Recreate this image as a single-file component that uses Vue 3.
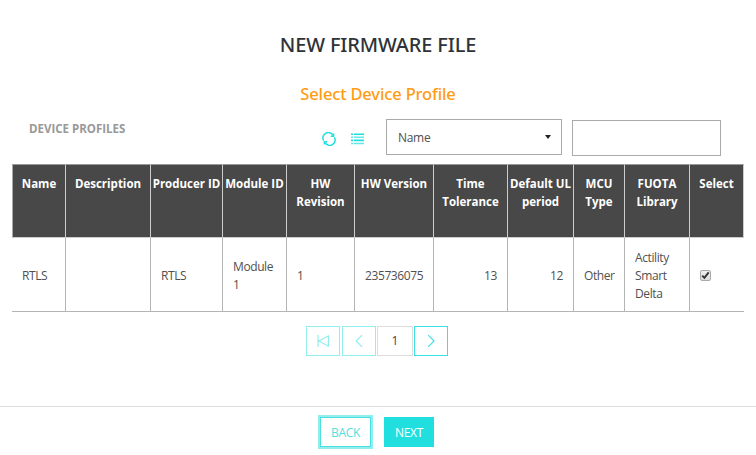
<script setup>
import { ref } from 'vue'

const columns = [
  { label: ['Name'], width: 54 },
  { label: ['Description'], width: 85 },
  { label: ['Producer ID'], width: 72 },
  { label: ['Module ID'], width: 64 },
  { label: ['HW', 'Revision'], width: 68 },
  { label: ['HW Version'], width: 79 },
  { label: ['Time', 'Tolerance'], width: 74 },
  { label: ['Default UL', 'period'], width: 66 },
  { label: ['MCU', 'Type'], width: 51 },
  { label: ['FUOTA', 'Library'], width: 65 },
  { label: ['Select'], width: 54 },
]
const cells = [
  { lines: ['RTLS'] },
  { lines: [] },
  { lines: ['RTLS'] },
  { lines: ['Module', '1'] },
  { lines: ['1'] },
  { lines: ['235736075'], right: true },
  { lines: ['13'], right: true },
  { lines: ['12'], right: true },
  { lines: ['Other'] },
  { lines: ['Actility', 'Smart', 'Delta'] },
]
const selected = ref(true)
const filter = ref('')
</script>

<template>
  <main class="page">
    <h1>NEW FIRMWARE FILE</h1>
    <h2>Select Device Profile</h2>
    <div class="toolbar">
      <span class="caption">DEVICE PROFILES</span>
      <svg class="refresh" width="14" height="14" viewBox="0 0 14 14" fill="none" stroke="#22dede" stroke-width="1.5">
        <path d="M1.6 8.6A5.3 5.3 0 0 1 10.9 3.3M12.4 5.4A5.3 5.3 0 0 1 3.1 10.7" />
        <path d="M11.6 1.4v2.8H8.8M2.4 12.6V9.8h2.8" />
      </svg>
      <svg class="list" width="13" height="12" viewBox="0 0 13 12" fill="#22dede">
        <path d="M0 .4h2v1.6H0zM3 .4h10v1.6H3zM0 6.6h2v1.6H0zM3 6.6h10v1.6H3z" />
        <path opacity=".7" d="M0 3.5h2v1.5H0zM3 3.5h10v1.5H3zM0 9.7h2v1.5H0zM3 9.7h10v1.5H3z" />
      </svg>
      <div class="select"><span>Name</span><i class="caret"></i></div>
      <input v-model="filter" class="filter" type="text" />
    </div>
    <table>
      <colgroup>
        <col v-for="c in columns" :key="c.label[0]" :style="{ width: c.width + 'px' }" />
      </colgroup>
      <thead>
        <tr>
          <th v-for="c in columns" :key="c.label[0]">
            <div v-for="l in c.label" :key="l">{{ l }}</div>
          </th>
        </tr>
      </thead>
      <tbody>
        <tr>
          <td v-for="(c, i) in cells" :key="i" :class="{ right: c.right }">
            <div v-for="l in c.lines" :key="l">{{ l }}</div>
          </td>
          <td>
            <button class="check" role="checkbox" :aria-checked="selected" @click="selected = !selected">
              <svg v-if="selected" width="9" height="9" viewBox="0 0 9 9" fill="none" stroke="#333" stroke-width="1.9">
                <path d="M1.2 4.6L3.4 6.9L7.7 1.3" />
              </svg>
            </button>
          </td>
        </tr>
      </tbody>
    </table>
    <nav class="pager">
      <button class="dim">
        <svg width="14" height="14" viewBox="0 0 14 14"><path d="M2 1v12M12.4 1.8v10.4L2.8 7z" /></svg>
      </button>
      <button class="dim">
        <svg width="14" height="14" viewBox="0 0 14 14"><path d="M10 1.2L4.2 7l5.8 5.8" /></svg>
      </button>
      <button class="current">1</button>
      <button>
        <svg width="14" height="14" viewBox="0 0 14 14"><path d="M4.2 1.2L10 7L4.2 12.8" /></svg>
      </button>
    </nav>
    <footer>
      <button class="back">BACK</button>
      <button class="next">NEXT</button>
    </footer>
  </main>
</template>

<style>
body {
  background: #fff;
}
</style>

<style scoped>
* {
  box-sizing: border-box;
}
.page {
  width: 756px;
  height: 455px;
  display: flex;
  flex-direction: column;
  overflow: hidden;
  font-family: "Open Sans", "Noto Sans", sans-serif;
  font-size: 12px;
  line-height: 18px;
  color: #505050;
}
h1 {
  margin: 31px 0 0;
  height: 28px;
  font: 500 20px/28px "Noto Sans", sans-serif;
  letter-spacing: -0.15px;
  color: #2e3338;
  text-align: center;
}
h2 {
  margin: 23px 0 0;
  height: 24px;
  font: 500 16.5px/24px "Noto Sans", sans-serif;
  letter-spacing: -0.15px;
  color: #ff9c12;
  text-align: center;
}
.toolbar {
  display: flex;
  align-items: flex-start;
  height: 58px;
  padding: 13px 0 0 29px;
}
.caption {
  width: 293px;
  padding-top: 1px;
  font-size: 11.5px;
  font-weight: 700;
  color: #999;
}
.refresh {
  margin-top: 13px;
}
.list {
  margin: 14px 0 0 15px;
}
.select {
  display: flex;
  align-items: center;
  justify-content: space-between;
  width: 176px;
  height: 36px;
  margin-left: 22px;
  padding: 0 10px 0 11px;
  border: 1px solid #aaa;
  letter-spacing: -0.5px;
}
.select span {
  padding-top: 1px;
  letter-spacing: -0.3px;
}
.caret {
  border: 3.5px solid transparent;
  border-top: 4px solid #222;
  border-bottom: 0;
}
.filter {
  width: 149px;
  height: 36px;
  margin: 1px 0 0 10px;
  border: 1px solid #aaa;
  background: #fff;
  outline: 0;
}
table {
  width: 732px;
  margin-left: 12px;
  table-layout: fixed;
  border-collapse: separate;
  border-spacing: 0;
}
th {
  height: 74px;
  padding: 10px 0 0;
  background: #484848;
  border: solid #ccc;
  border-width: 1px 1px 1px 0;
  border-top-color: #999;
  vertical-align: top;
  font-size: 11.5px;
  font-weight: 700;
  white-space: nowrap;
  color: #fff;
}
th:first-child {
  border-left: 1px solid #aaa;
}
td {
  height: 74px;
  padding: 2px 10px 0;
  border: solid #b4b4b4;
  border-width: 0 1px 1px 0;
  vertical-align: middle;
  white-space: nowrap;
  letter-spacing: -0.4px;
}
td:last-child {
  border-right: 0;
}
.right {
  text-align: right;
}
.check {
  display: flex;
  align-items: center;
  justify-content: center;
  width: 11px;
  height: 11px;
  padding: 0;
  background: linear-gradient(#eee, #ddd);
  border: 1px solid #aaa;
  border-radius: 2px;
}
.pager {
  display: flex;
  gap: 1px;
  height: 30px;
  margin: 14px 0 0 306px;
}
.pager button {
  display: flex;
  align-items: center;
  justify-content: center;
  width: 34px;
  height: 30px;
  padding: 0;
  border: 1px solid #3de0e0;
  background: #fff;
  font: inherit;
  color: #444;
}
.pager .dim {
  border-color: #93eeee;
}
.pager .dim:first-child {
  margin-right: 1px;
}
.pager .current {
  width: 36px;
  border-color: #ddd;
}
.pager svg {
  fill: none;
  stroke: #3ddede;
  stroke-width: 1.1;
}
.pager .dim svg {
  stroke: #8aeeee;
}
footer {
  display: flex;
  gap: 13px;
  margin-top: 50px;
  padding: 10px 0 0 320px;
  border-top: 1px solid #ddd;
}
footer button {
  height: 30px;
  padding: 1px 0 0;
  border: 0;
  font: 12px/28px "Open Sans", sans-serif;
  letter-spacing: -0.3px;
}
.back {
  width: 51px;
  background: #fff;
  border: 1px solid #4cdfdf;
  box-shadow: 0 0 0 2px #90eeee;
  color: #55dede;
}
.next {
  width: 50px;
  background: #22dfdf;
  color: #fff;
}
</style>
